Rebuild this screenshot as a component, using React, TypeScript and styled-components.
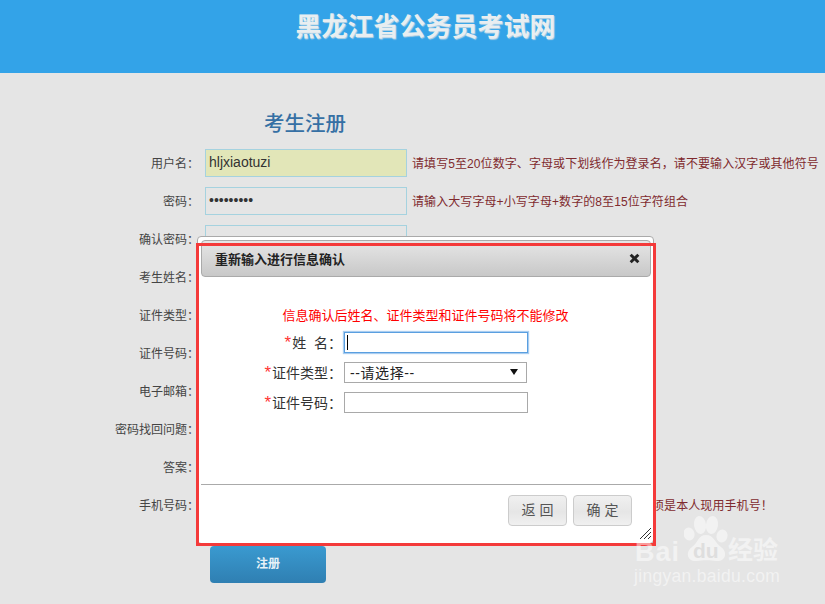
import styled, { createGlobalStyle } from 'styled-components';

const fontStack = `"Liberation Sans", "Noto Sans CJK SC", sans-serif`;

const rows = [
  { label: '用户名：', value: 'hljxiaotuzi', filled: true, hint: '请填写5至20位数字、字母或下划线作为登录名，请不要输入汉字或其他符号' },
  { label: '密码：', value: '•••••••••', hint: '请输入大写字母+小写字母+数字的8至15位字符组合' },
  { label: '确认密码：' },
  { label: '考生姓名：' },
  { label: '证件类型：' },
  { label: '证件号码：' },
  { label: '电子邮箱：' },
  { label: '密码找回问题：' },
  { label: '答案：' },
  // the start of this hint sits behind the dialog
  { label: '手机号码：', hint: '须是本人现用手机号！', behindDialog: true },
];

export default function App() {
  return (
    <Page>
      <GlobalStyle />
      <Header>黑龙江省公务员考试网</Header>
      <Main>
        <FormTitle>考生注册</FormTitle>
        {rows.map((row) => (
          <FormRow key={row.label}>
            <FormLabel>{row.label}</FormLabel>
            <FormInput $filled={row.filled}>{row.value}</FormInput>
            {row.hint && <Hint $behindDialog={row.behindDialog}>{row.hint}</Hint>}
          </FormRow>
        ))}
        <SubmitButton>注册</SubmitButton>
      </Main>

      <Dialog>
        <DialogBar>
          <DialogTitle>重新输入进行信息确认</DialogTitle>
          <CloseIcon viewBox="0 0 10 10">
            <path d="M1.5 1.5 L8.5 8.5 M8.5 1.5 L1.5 8.5" stroke="#222" strokeWidth="2.6" />
          </CloseIcon>
        </DialogBar>
        <DialogBody>
          <Warning>信息确认后姓名、证件类型和证件号码将不能修改</Warning>
          <DialogRow>
            <DialogLabel><Star>*</Star>姓&nbsp;&nbsp;名：</DialogLabel>
            <DialogInput $focused><Caret /></DialogInput>
          </DialogRow>
          <DialogRow>
            <DialogLabel><Star>*</Star>证件类型：</DialogLabel>
            <DialogSelect>
              --请选择--
              <SelectArrow viewBox="0 0 8 6">
                <path d="M0 0 H8 L4 6 Z" fill="#111" />
              </SelectArrow>
            </DialogSelect>
          </DialogRow>
          <DialogRow>
            <DialogLabel><Star>*</Star>证件号码：</DialogLabel>
            <DialogInput />
          </DialogRow>
        </DialogBody>
        <DialogFooter>
          <FooterButton>返 回</FooterButton>
          <FooterButton>确 定</FooterButton>
        </DialogFooter>
        <ResizeGrip viewBox="0 0 11 11">
          <path d="M0 11 L11 0 M4 11 L11 4 M8 11 L11 8" stroke="#333" strokeWidth="1" />
        </ResizeGrip>
      </Dialog>

      <Annotation />

      <Watermark>
        <PawLogo viewBox="0 0 46 56">
          <ellipse cx="5" cy="20" rx="5.5" ry="6.5" transform="rotate(-15 5 20)" />
          <ellipse cx="16" cy="11" rx="6" ry="9" transform="rotate(-8 16 11)" />
          <ellipse cx="28" cy="11" rx="6" ry="9" transform="rotate(8 28 11)" />
          <ellipse cx="38" cy="22" rx="5.5" ry="6.5" transform="rotate(15 38 22)" />
          <path d="M22 21 C30 21 31 29 37 33 C44 38 42 48 32 47 C27 46 18 46 13 47 C3 48 1 38 8 33 C14 29 14 21 22 21 Z" />
        </PawLogo>
        <BrandWord>Bai</BrandWord>
        <BrandPaw>du</BrandPaw>
        <BrandCn>经验</BrandCn>
        <BrandUrl>jingyan.baidu.com</BrandUrl>
      </Watermark>
    </Page>
  );
}

const GlobalStyle = createGlobalStyle`
  html, body {
    margin: 0;
    padding: 0;
    background: #e5e5e5;
  }
`;

const Page = styled.div`
  position: relative;
  width: 825px;
  height: 604px;
  overflow: hidden;
  background: #e5e5e5;
  font-family: ${fontStack};
`;

const Header = styled.div`
  height: 73px;
  padding: 9px 0 0 26px;
  box-sizing: border-box;
  background: #33a3e8;
  color: #e8eef1;
  font-size: 26px;
  font-weight: 700;
  line-height: 36px;
  text-align: center;
  text-shadow: 1px 1px 1px #b9d3e4;
`;

const Main = styled.div`
  display: flex;
  flex-direction: column;
  padding-top: 37px;
`;

const FormTitle = styled.div`
  margin: 0 0 11px 264px;
  height: 28px;
  color: #3670a4;
  font-size: 20.5px;
  font-weight: 500;
  line-height: 28px;
`;

const FormRow = styled.div`
  display: flex;
  align-items: center;
  height: 28px;
  margin-bottom: 10px;
`;

const FormLabel = styled.div`
  width: 199px;
  margin-top: -2px;
  color: #444;
  font-size: 12px;
  text-align: right;
  white-space: nowrap;
`;

const FormInput = styled.div<{ $filled?: boolean }>`
  width: 202px;
  height: 28px;
  margin-left: 6px;
  padding-left: 3px;
  box-sizing: border-box;
  border: 1px solid #a5d2df;
  background: ${({ $filled }) => ($filled ? '#e2e6b8' : 'transparent')};
  color: #333;
  font-size: 14px;
  line-height: 24px;
`;

const Hint = styled.div<{ $behindDialog?: boolean }>`
  margin-left: ${({ $behindDialog }) => ($behindDialog ? '245px' : '5px')};
  margin-top: -1px;
  color: #7f2a2e;
  font-size: 12px;
  letter-spacing: 0.08px;
  white-space: nowrap;
`;

const SubmitButton = styled.div`
  width: 116px;
  height: 37px;
  margin: 17px 0 0 210px;
  border-radius: 4px;
  background: linear-gradient(#3a9ad0, #2f7fb2);
  color: #e8f2f8;
  font-size: 12px;
  font-weight: 700;
  line-height: 37px;
  text-align: center;
`;

const Dialog = styled.div`
  position: absolute;
  left: 197px;
  top: 236px;
  display: flex;
  flex-direction: column;
  width: 457px;
  height: 308px;
  padding: 3px 2px 3px 3px;
  box-sizing: border-box;
  border: 1px solid #aaa;
  border-radius: 4px;
  background: #fff;
`;

const DialogBar = styled.div`
  display: flex;
  align-items: center;
  justify-content: space-between;
  flex: none;
  height: 37px;
  padding: 0 10px 0 13px;
  box-sizing: border-box;
  border: 1px solid #aaa;
  border-radius: 4px;
  background: linear-gradient(#e6e6e6, #c8c8c8);
`;

const DialogTitle = styled.div`
  color: #222;
  font-size: 13px;
  font-weight: 700;
`;

const CloseIcon = styled.svg`
  width: 11px;
  height: 11px;
`;

const DialogBody = styled.div`
  flex: 1;
  display: flex;
  flex-direction: column;
  padding-top: 30px;
`;

const Warning = styled.div`
  height: 18px;
  margin: 0 1px 6px 0;
  color: #f00;
  font-size: 13px;
  line-height: 18px;
  text-align: center;
`;

const DialogRow = styled.div`
  display: flex;
  align-items: center;
  height: 22px;
  margin-bottom: 8px;
`;

const DialogLabel = styled.div`
  width: 141px;
  color: #333;
  font-size: 14px;
  text-align: right;
  white-space: nowrap;
`;

const Star = styled.span`
  margin-right: 1px;
  color: #f33;
  font-size: 17px;
  line-height: 14px;
`;

const DialogInput = styled.div<{ $focused?: boolean }>`
  display: flex;
  align-items: center;
  width: 184px;
  height: 21px;
  margin-left: 2px;
  padding-left: 2px;
  box-sizing: border-box;
  border: 1px solid ${({ $focused }) => ($focused ? '#5a9fe0' : '#a9a9a9')};
  box-shadow: ${({ $focused }) => ($focused ? '0 0 1px 1px #a9cdf0' : 'none')};
  background: #fff;
`;

const Caret = styled.span`
  width: 1px;
  height: 15px;
  background: #000;
`;

const DialogSelect = styled.div`
  display: flex;
  align-items: center;
  justify-content: space-between;
  width: 183px;
  height: 21px;
  margin-left: 2px;
  padding: 0 8px 0 5px;
  box-sizing: border-box;
  border: 1px solid #a9a9a9;
  color: #222;
  font-size: 14px;
  letter-spacing: 0.6px;
`;

const SelectArrow = styled.svg`
  width: 8px;
  height: 6px;
`;

const DialogFooter = styled.div`
  display: flex;
  justify-content: flex-end;
  gap: 6px;
  flex: none;
  height: 56px;
  padding: 10px 19px 0 0;
  box-sizing: border-box;
  border-top: 1px solid #aaa;
`;

const FooterButton = styled.div`
  width: 59px;
  height: 31px;
  box-sizing: border-box;
  border: 1px solid #ccc;
  border-radius: 4px;
  background: linear-gradient(#f0f0f0, #e6e6e6 55%, #f0f0f0);
  color: #555;
  font-size: 14px;
  line-height: 29px;
  text-align: center;
`;

const ResizeGrip = styled.svg`
  position: absolute;
  right: 2px;
  bottom: 4px;
  width: 11px;
  height: 11px;
`;

const Annotation = styled.div`
  position: absolute;
  left: 196px;
  top: 243px;
  width: 460px;
  height: 303px;
  box-sizing: border-box;
  border: 3px solid #f43a3a;
  pointer-events: none;
`;

// baidu watermark, its parts overlap each other
const Watermark = styled.div`
  position: absolute;
  left: 634px;
  top: 514px;
  width: 150px;
  height: 74px;
  color: rgba(255, 255, 255, 0.5);
  font-weight: 700;
  white-space: nowrap;
`;

const PawLogo = styled.svg`
  position: absolute;
  left: 50px;
  top: 0;
  width: 46px;
  height: 56px;
  fill: rgba(255, 255, 255, 0.5);
`;

const BrandWord = styled.span`
  position: absolute;
  left: 1px;
  top: 20px;
  font-size: 27px;
  letter-spacing: 1px;
  line-height: 36px;
`;

const BrandPaw = styled.span`
  position: absolute;
  left: 59px;
  top: 25px;
  color: #dedede;
  font-size: 21px;
  line-height: 24px;
`;

const BrandCn = styled.span`
  position: absolute;
  left: 94px;
  top: 21px;
  font-size: 25px;
  line-height: 30px;
`;

const BrandUrl = styled.div`
  position: absolute;
  left: 0;
  top: 52px;
  font-size: 17.5px;
  font-weight: 400;
  line-height: 20px;
  letter-spacing: 0.3px;
`;
